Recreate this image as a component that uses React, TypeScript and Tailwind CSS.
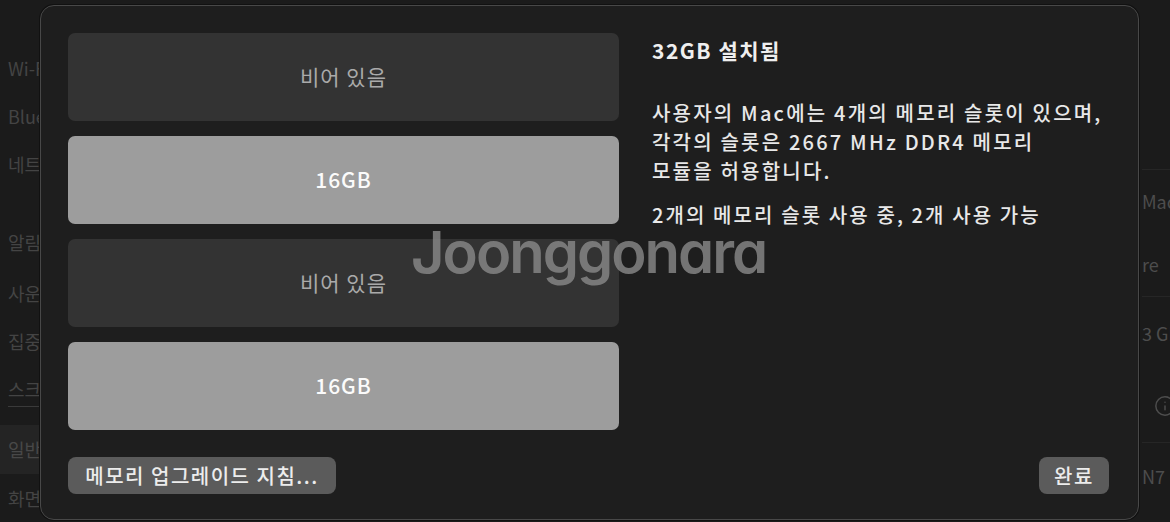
import { Info } from "lucide-react";

const font = "[font-family:'Noto_Sans_CJK_KR','Noto_Sans',sans-serif]";

type Slot = { size?: string };

const slots: Slot[] = [{}, { size: "16GB" }, {}, { size: "16GB" }];

const SidebarItem = ({ label, className = "" }: { label: string; className?: string }) => (
  <div className={`flex h-[49px] items-center pl-2 text-[18px] text-[#444444] ${className}`}>
    {label}
  </div>
);

const MemorySlot = ({ size }: Slot) =>
  size ? (
    <div className="flex h-[88px] items-center justify-center rounded-[7px] bg-[#9d9d9d] text-[21px] font-medium tracking-[1px] text-[#fbfbfb]">
      {size}
    </div>
  ) : (
    <div className="flex h-[88px] items-center justify-center rounded-[7px] bg-[#333333] text-[21px] tracking-[1px] text-[#aaaaaa]">
      비어 있음
    </div>
  );

export default function App() {
  return (
    <div className={`relative h-[522px] w-[1170px] overflow-hidden bg-[#1b1b1b] ${font}`}>
      {/* settings window behind the sheet */}
      <div className="flex h-full">
        <div className="flex w-[230px] flex-col pt-[44px]">
          <SidebarItem label="Wi-Fi" />
          <SidebarItem label="Bluetooth" />
          <SidebarItem label="네트워크" />
          <div className="h-[29px]" />
          <SidebarItem label="알림" className="h-[54px]" />
          <SidebarItem label="사운드" />
          <SidebarItem label="집중 모드" />
          <SidebarItem label="스크린 타임" className="h-[41px] underline decoration-[#3a3a3a] underline-offset-[9px]" />
          <div className="h-[12px]" />
          <div className="flex h-[50px] items-center rounded-r-[6px] bg-[#242424] pl-2 text-[18px] text-[#484848]">
            일반
          </div>
          <SidebarItem label="화면 모드" />
        </div>
        <div className="flex-1" />
        <div className="flex w-[31px] flex-col overflow-hidden whitespace-nowrap pl-[3px] text-[18px] text-[#4d4d4d]">
          <div className="h-[170px] border-b border-[#262626]" />
          <div className="flex h-[62px] items-center">Mac</div>
          <div className="flex h-[65px] items-center border-b border-[#262626]">re</div>
          <div className="flex h-[72px] items-center">3 GB</div>
          <div className="flex h-[74px] items-center border-b border-[#262626]">
            <Info size={22} strokeWidth={1.6} className="ml-[12px] shrink-0" />
          </div>
          <div className="flex h-[66px] items-center">N7</div>
        </div>
      </div>

      {/* memory sheet */}
      <div className="absolute left-[40px] top-[5px] flex h-[515px] w-[1099px] flex-col rounded-[14px] border border-[#484848] bg-[#1e1e1e] px-[27px] pt-[27px] shadow-[0_0_0_1px_#111]">
        <div className="flex gap-[33px]">
          <div className="flex w-[551px] shrink-0 flex-col gap-[15px]">
            {slots.map((s, i) => (
              <MemorySlot key={i} size={s.size} />
            ))}
          </div>
          <div className="flex flex-col whitespace-nowrap pt-[4px] text-[#e8e8e8]">
            <div className="text-[21px] font-bold leading-[26px] tracking-[1.5px] text-[#efefef]">
              32GB 설치됨
            </div>
            <p className="mt-[35px] text-[20px] font-medium leading-[29px] tracking-[2.2px]">
              사용자의 Mac에는 4개의 메모리 슬롯이 있으며,
              <br />
              각각의 슬롯은 2667 MHz DDR4 메모리
              <br />
              모듈을 허용합니다.
            </p>
            <p className="mt-[15px] text-[20px] font-medium leading-[29px] tracking-[2.1px]">
              2개의 메모리 슬롯 사용 중, 2개 사용 가능
            </p>
          </div>
        </div>
        <div className="mt-[27px] flex items-center justify-between">
          <button className="flex h-[37px] w-[268px] items-center justify-center rounded-[8px] bg-[#5b5b5b] text-[20px] font-medium tracking-[1.5px] text-[#ececec]">
            메모리 업그레이드 지침...
          </button>
          <button className="mr-[2px] flex h-[37px] w-[70px] items-center justify-center rounded-[8px] bg-[#5b5b5b] text-[20px] font-medium tracking-[1.5px] text-[#ececec]">
            완료
          </button>
        </div>
      </div>

      {/* watermark */}
      <div className="pointer-events-none absolute left-[411px] top-[223px] text-[58px] font-semibold leading-none tracking-[-2px] text-[#8a8a8a]/80 [font-family:Inter,sans-serif] [font-feature-settings:'cv11']">
        Joonggonara
      </div>
    </div>
  );
}
